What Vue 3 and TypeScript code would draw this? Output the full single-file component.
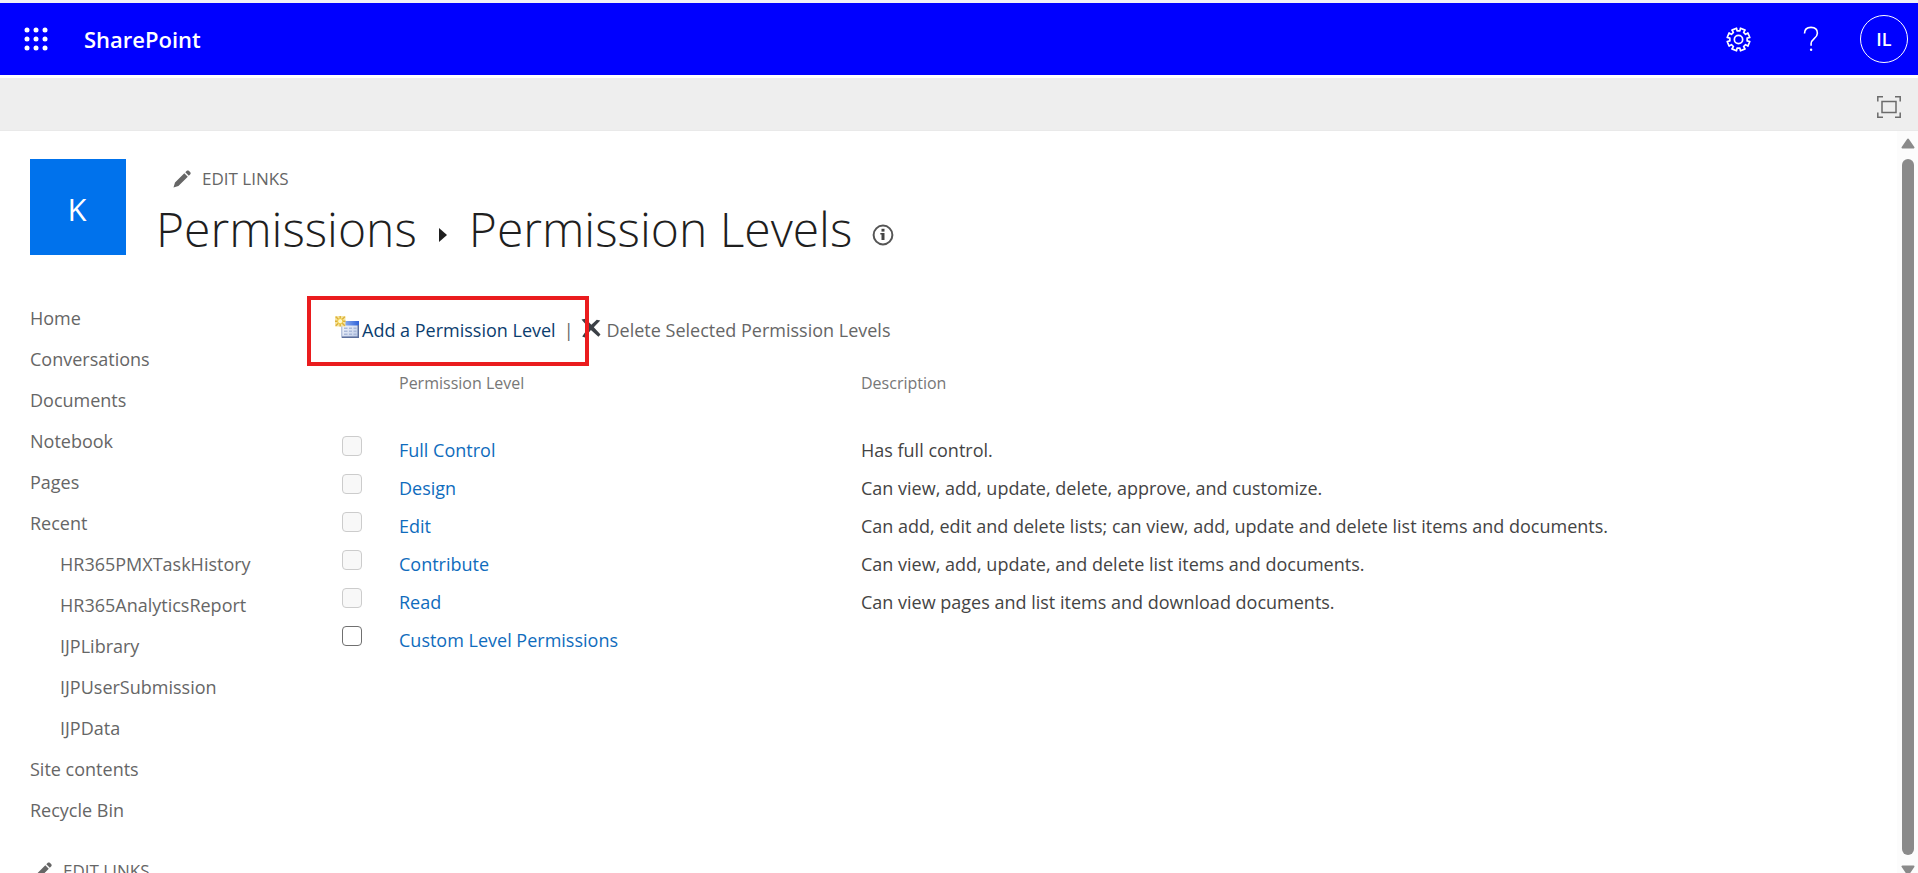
<script setup lang="ts">
import { ref } from 'vue'

interface NavItem {
  label: string
  nested?: boolean
}

interface Level {
  name: string
  description: string
  locked: boolean
}

const navItems: NavItem[] = [
  { label: 'Home' },
  { label: 'Conversations' },
  { label: 'Documents' },
  { label: 'Notebook' },
  { label: 'Pages' },
  { label: 'Recent' },
  { label: 'HR365PMXTaskHistory', nested: true },
  { label: 'HR365AnalyticsReport', nested: true },
  { label: 'IJPLibrary', nested: true },
  { label: 'IJPUserSubmission', nested: true },
  { label: 'IJPData', nested: true },
  { label: 'Site contents' },
  { label: 'Recycle Bin' },
]

const levels: Level[] = [
  { name: 'Full Control', description: 'Has full control.', locked: true },
  { name: 'Design', description: 'Can view, add, update, delete, approve, and customize.', locked: true },
  { name: 'Edit', description: 'Can add, edit and delete lists; can view, add, update and delete list items and documents.', locked: true },
  { name: 'Contribute', description: 'Can view, add, update, and delete list items and documents.', locked: true },
  { name: 'Read', description: 'Can view pages and list items and download documents.', locked: true },
  { name: 'Custom Level Permissions', description: '', locked: false },
]

const selected = ref<string[]>([])

// Outline of an eight-toothed gear centred on (12, 12).
function gearPath(): string {
  const points: string[] = []
  const teeth = 8
  for (let i = 0; i < teeth; i++) {
    const centre = (i * 2 * Math.PI) / teeth + Math.PI / 8
    const corners: [number, number][] = [
      [-0.23, 8.4],
      [-0.22, 11],
      [0.22, 11],
      [0.23, 8.4],
    ]
    for (const [offset, radius] of corners) {
      const x = 12 + radius * Math.cos(centre + offset)
      const y = 12 + radius * Math.sin(centre + offset)
      points.push(`${x.toFixed(2)} ${y.toFixed(2)}`)
    }
  }
  return `M${points.join('L')}Z`
}

const gear = gearPath()
</script>

<template>
  <div class="page">
    <header class="suite">
      <button class="plain launcher" type="button" aria-label="App launcher">
        <svg width="24" height="24" viewBox="0 0 24 24" fill="#fff">
          <template v-for="row in 3" :key="row">
            <circle v-for="col in 3" :key="col" :cx="col * 9 - 6" :cy="row * 9 - 6" r="2.5" />
          </template>
        </svg>
      </button>
      <a class="brand" href="#">SharePoint</a>
      <div class="suite-actions">
        <button class="plain" type="button" aria-label="Settings">
          <svg width="25" height="25" viewBox="0 0 24 24" fill="none" stroke="#fff" stroke-width="1.6" stroke-linejoin="round">
            <path :d="gear" />
            <circle cx="12" cy="12" r="4" />
          </svg>
        </button>
        <button class="plain" type="button" aria-label="Help">
          <svg width="16" height="26" viewBox="0 0 16 26" fill="none" stroke="#fff" stroke-width="1.6">
            <path d="M1.5 7.5C1.5 3.5 4.2 1.4 8 1.4s6.4 2.1 6.4 5.8c0 5-6.3 5.7-6.3 10.3v2.2" />
            <circle cx="8.1" cy="23.8" r="1.2" fill="#fff" stroke="none" />
          </svg>
        </button>
        <button class="plain avatar" type="button" aria-label="Account manager">IL</button>
      </div>
    </header>

    <div class="ribbon">
      <button class="plain" type="button" aria-label="Focus on content">
        <svg width="24" height="22" viewBox="0 0 24 22" fill="none" stroke="#6b6b6b" stroke-width="1.5">
          <path d="M.8 5.5V.8H6M18 .8h5.2v4.7M23.2 16.5v4.7H18M6 21.2H.8v-4.7" />
          <rect x="5" y="5.5" width="14" height="11" />
        </svg>
      </button>
    </div>

    <div class="workspace">
      <div class="content">
        <div class="title-row">
          <a class="logo" href="#">K</a>
          <div class="title-area">
            <button class="plain edit-links" type="button">
              <svg width="18" height="18" viewBox="0 0 18 18" fill="#666">
                <path d="M.5 17.5 2 12.6 11.3 3.3l3.5 3.5-9.4 9.3zM12.3 2.3l1.5-1.5c.6-.6 1.4-.5 2 0l1.5 1.5c.5.6.5 1.4 0 2l-1.5 1.5z" />
              </svg>
              <span>EDIT LINKS</span>
            </button>
            <h1>
              <a href="#">Permissions</a>
              <svg class="crumb" width="8" height="14" viewBox="0 0 8 14"><path d="M0 0 8 7 0 14z" fill="#1f1f1f" /></svg>
              <span>Permission Levels</span>
              <svg class="info" width="22" height="22" viewBox="0 0 22 22">
                <circle cx="11" cy="11" r="9.4" fill="none" stroke="#555" stroke-width="2" />
                <rect x="9.5" y="4.8" width="3" height="2.8" fill="#444" />
                <path d="M8.3 9h4.2v7h-3v-5.6H8.3z" fill="#444" />
              </svg>
            </h1>
          </div>
        </div>

        <div class="columns">
          <nav aria-label="Site navigation">
            <ul>
              <li v-for="item in navItems" :key="item.label" :class="{ nested: item.nested }">
                <a href="#">{{ item.label }}</a>
              </li>
            </ul>
            <button class="plain edit-links nav-edit" type="button">
              <svg width="18" height="18" viewBox="0 0 18 18" fill="#666">
                <path d="M.5 17.5 2 12.6 11.3 3.3l3.5 3.5-9.4 9.3zM12.3 2.3l1.5-1.5c.6-.6 1.4-.5 2 0l1.5 1.5c.5.6.5 1.4 0 2l-1.5 1.5z" />
              </svg>
              <span>EDIT LINKS</span>
            </button>
          </nav>

          <main>
            <div class="toolbar">
              <a class="add" href="#">
                <svg width="24" height="24" viewBox="0 0 24 24">
                  <defs>
                    <linearGradient id="bar" x1="0" x2="1" y1="0" y2="0">
                      <stop offset="0" stop-color="#9dbcf5" />
                      <stop offset="1" stop-color="#2f62d8" />
                    </linearGradient>
                    <linearGradient id="sheet" x1="0" x2="1" y1="0" y2="1">
                      <stop offset="0" stop-color="#fff" />
                      <stop offset="1" stop-color="#b9c8e6" />
                    </linearGradient>
                  </defs>
                  <rect x="6.8" y="5.8" width="16.5" height="15.5" fill="url(#sheet)" stroke="#9aaace" />
                  <rect x="6.5" y="5" width="17.5" height="4.5" fill="url(#bar)" />
                  <path d="M23.3 9v12.3H7" fill="none" stroke="#5c6f9c" stroke-width="1.4" />
                  <path d="M9 12.3h3.5m1.5 0h3m1.5 0h3M9 15.3h3.5m1.5 0h3m1.5 0h3M9 18.3h3.5m1.5 0h3m1.5 0h3" stroke="#aab9da" stroke-width="1.4" />
                  <path d="M0 0h10.5v10.5H0z" fill="#f6e4a0" />
                  <path d="M5.2 0v10.5M0 5.2h10.5M.8.8l9 9M9.8.8l-9 9" stroke="#dcb03a" stroke-width="1.4" />
                  <circle cx="5.2" cy="5.2" r="2.6" fill="#fff9c9" stroke="#efc93c" />
                </svg>
                <span>Add a Permission Level</span>
              </a>
              <span class="divider">|</span>
              <a class="delete" href="#">
                <svg width="20" height="20" viewBox="0 0 20 20" fill="#3b4046">
                  <path d="M.5 1.5 4.5.8 10.3 6.7 15.8 1.8 19.3 2.6 12.8 9.2 19.5 16.5 17.4 18.8 9.9 12 3.8 19.4 1.2 18.5 7.4 9.6z" />
                </svg>
                <span>Delete Selected Permission Levels</span>
              </a>
              <div class="highlight" aria-hidden="true"></div>
            </div>

            <table>
              <thead>
                <tr>
                  <td class="check"></td>
                  <th class="name" scope="col">Permission Level</th>
                  <th scope="col">Description</th>
                </tr>
              </thead>
              <tbody>
                <tr v-for="level in levels" :key="level.name">
                  <td class="check">
                    <input v-model="selected" type="checkbox" :value="level.name" :disabled="level.locked" :aria-label="level.name" />
                  </td>
                  <td><a href="#">{{ level.name }}</a></td>
                  <td>{{ level.description }}</td>
                </tr>
              </tbody>
            </table>
          </main>
        </div>
      </div>

      <div class="scrollbar" aria-hidden="true">
        <svg width="14" height="11" viewBox="0 0 14 11"><path d="M7 1.5 12.5 9.5H1.5z" fill="#8a8a8a" stroke="#8a8a8a" stroke-width="2" stroke-linejoin="round" /></svg>
        <div class="thumb"></div>
        <svg width="14" height="11" viewBox="0 0 14 11"><path d="M7 9.5 1.5 1.5h11z" fill="#8a8a8a" stroke="#8a8a8a" stroke-width="2" stroke-linejoin="round" /></svg>
      </div>
    </div>
  </div>
</template>

<style>
body {
  overflow: hidden;
}
</style>

<style scoped>
.page {
  display: flex;
  flex-direction: column;
  box-sizing: border-box;
  height: 100vh;
  overflow: hidden;
  border-top: 3px solid #f1eff7;
  background: #fff;
  color: #444;
  font-family: "Segoe UI", "Open Sans", "Noto Sans", sans-serif;
  font-size: 18px;
}

a {
  color: inherit;
  text-decoration: none;
}

svg {
  flex: none;
  display: block;
}

.plain {
  padding: 0;
  border: 0;
  background: none;
  color: inherit;
  font: inherit;
  cursor: pointer;
}

.suite {
  display: flex;
  flex: none;
  align-items: center;
  height: 72px;
  padding: 0 10px 0 24px;
  background: #00f;
  color: #fff;
}

.brand {
  margin-left: 36px;
  font-size: 22px;
  font-weight: 600;
}

.suite-actions {
  display: flex;
  align-items: center;
  gap: 52px;
  margin-left: auto;
}

.suite-actions .avatar {
  box-sizing: border-box;
  width: 48px;
  height: 48px;
  margin-left: -11px;
  border: 1px solid #fff;
  border-radius: 50%;
  font-size: 18px;
  font-weight: 600;
}

.ribbon {
  display: flex;
  flex: none;
  align-items: center;
  justify-content: flex-end;
  box-sizing: border-box;
  height: 53px;
  margin-top: 3px;
  padding: 6px 17px 0 0;
  border-bottom: 1px solid #e9e9e9;
  background: #eee;
}

.workspace {
  display: flex;
  flex: 1;
  min-height: 0;
}

.content {
  flex: 1;
  min-width: 0;
  overflow: hidden;
  padding: 28px 0 0 30px;
}

.title-row {
  display: flex;
  gap: 30px;
}

.logo {
  display: flex;
  align-items: center;
  justify-content: center;
  width: 96px;
  height: 96px;
  padding: 4px 2px 0 0;
  box-sizing: border-box;
  background: #0072ec;
  color: #fff;
  font-size: 31px;
}

.edit-links {
  display: flex;
  align-items: center;
  gap: 11px;
  height: 40px;
  margin-left: 17px;
  color: #666;
  font-size: 17px;
  line-height: 24px;
}

h1 {
  display: flex;
  align-items: center;
  margin: 0;
  color: #1f1f1f;
  font-size: 48px;
  font-weight: 300;
  line-height: 60px;
}

.crumb {
  margin: 11px 22px 0;
}

.info {
  margin: 12px 0 0 20px;
}

.columns {
  display: flex;
  margin-top: 39px;
}

nav {
  flex: none;
  width: 276px;
  color: #666;
}

ul {
  margin: 0;
  padding: 0;
  list-style: none;
}

li {
  line-height: 41px;
}

.nested {
  padding-left: 30px;
}

.nav-edit {
  margin: 20px 0 0 4px;
}

main {
  flex: 1;
  padding-left: 29px;
}

.toolbar {
  position: relative;
  display: flex;
  align-items: center;
  height: 60px;
  color: #666;
}

.toolbar span {
  padding-top: 4px;
}

.add,
.delete {
  display: flex;
  align-items: center;
}

.add {
  gap: 3px;
  color: #0b3d6e;
}

.divider {
  margin: 0 7px 0 8px;
}

.delete {
  gap: 6px;
}

.highlight {
  position: absolute;
  top: -2px;
  left: -28px;
  box-sizing: border-box;
  width: 282px;
  height: 70px;
  border: 4px solid #ea1c1e;
  pointer-events: none;
}

table {
  width: 100%;
  table-layout: fixed;
  border-collapse: collapse;
}

td,
th {
  height: 38px;
  padding: 0;
  text-align: left;
}

thead td,
thead th {
  box-sizing: border-box;
  height: 73px;
  padding-bottom: 24px;
}

th {
  color: #777;
  font-size: 16px;
  font-weight: 400;
}

.check {
  width: 64px;
}

.name {
  width: 462px;
}

tbody a {
  color: #0f6cbd;
}

input {
  display: block;
  appearance: none;
  box-sizing: border-box;
  width: 20px;
  height: 20px;
  margin: 0 0 8px 7px;
  border: 1px solid #707070;
  border-radius: 4px;
  background: #fff;
}

input:disabled {
  border-color: #ccc;
  background: #f8f8f8;
}

input:checked {
  background: #0f6cbd;
}

.scrollbar {
  display: flex;
  flex: none;
  flex-direction: column;
  align-items: center;
  gap: 10px;
  box-sizing: border-box;
  width: 21px;
  padding-top: 7px;
  background: #fcfcfc;
}

.scrollbar svg:last-child {
  margin-bottom: -3px;
}

.thumb {
  flex: 1;
  width: 12px;
  border-radius: 6px;
  background: #8a8a8a;
}
</style>
